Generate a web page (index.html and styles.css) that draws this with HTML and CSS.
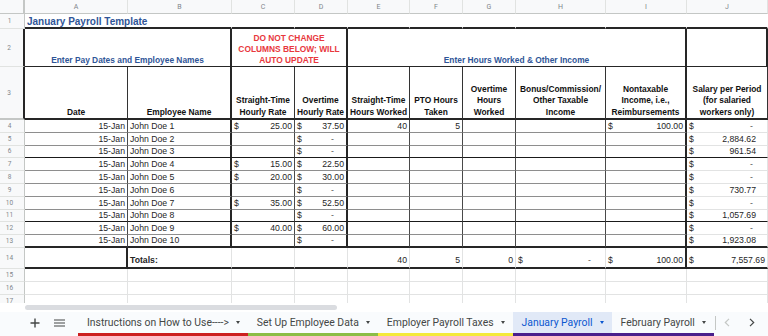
FILE: index.html
```html
<!DOCTYPE html>
<html lang="en">
  <head>
    <meta charset="UTF-8" />
    <meta name="viewport" content="width=device-width, initial-scale=1.0" />
    <title>January Payroll</title>
    <link rel="stylesheet" href="styles.css">
  </head>
  <body>
    <div class="app">
      <div class="sheet">
        <table class="grid">
          <colgroup>
            <col class="w-rh">
            <col class="w-a">
            <col class="w-b">
            <col class="w-c">
            <col class="w-d">
            <col class="w-e">
            <col class="w-f">
            <col class="w-g">
            <col class="w-h">
            <col class="w-i">
            <col class="w-j">
          </colgroup>
          <tr class="letters">
            <th class="corner"></th>
            <th class="col">A</th>
            <th class="col">B</th>
            <th class="col">C</th>
            <th class="col">D</th>
            <th class="col">E</th>
            <th class="col">F</th>
            <th class="col">G</th>
            <th class="col">H</th>
            <th class="col">I</th>
            <th class="col">J</th>
          </tr>
          <tr class="row-title">
            <th class="rh">1</th>
            <td class="title" colspan="2">January Payroll Template</td>
            <td></td><td></td><td></td><td></td><td></td><td></td><td></td><td></td>
          </tr>
          <tr class="row-groups">
            <th class="rh edge">2</th>
            <td class="group" colspan="2">Enter Pay Dates and Employee Names</td>
            <td class="group warn" colspan="2">DO NOT CHANGE<br>COLUMNS BELOW; WILL<br>AUTO UPDATE</td>
            <td class="group" colspan="5">Enter Hours Worked &amp; Other Income</td>
            <td class="group"></td>
          </tr>
          <tr class="row-heads">
            <th class="rh edge freeze">3</th>
            <td>Date</td>
            <td>Employee Name</td>
            <td>Straight-Time<br>Hourly Rate</td>
            <td>Overtime<br>Hourly Rate</td>
            <td>Straight-Time<br>Hours Worked</td>
            <td>PTO Hours<br>Taken</td>
            <td>Overtime<br>Hours<br>Worked</td>
            <td>Bonus/Commission/<br>Other Taxable<br>Income</td>
            <td>Nontaxable<br>Income, i.e.,<br>Reimbursements</td>
            <td>Salary per Period<br>(for salaried<br>workers only)</td>
          </tr>
          <tr class="data">
            <th class="rh">4</th>
            <td class="num">15-Jan</td><td>John Doe 1</td>
            <td class="acct"><span class="cur">$</span>25.00</td>
            <td class="acct"><span class="cur">$</span>37.50</td>
            <td class="num">40</td><td class="num">5</td><td></td><td></td>
            <td class="acct"><span class="cur">$</span>100.00</td>
            <td class="acct"><span class="cur">$</span><span class="dash">-</span></td>
          </tr>
          <tr class="data">
            <th class="rh">5</th>
            <td class="num">15-Jan</td><td>John Doe 2</td>
            <td></td>
            <td class="acct"><span class="cur">$</span><span class="dash">-</span></td>
            <td></td><td></td><td></td><td></td><td></td>
            <td class="acct"><span class="cur">$</span>2,884.62</td>
          </tr>
          <tr class="data dark">
            <th class="rh">6</th>
            <td class="num">15-Jan</td><td>John Doe 3</td>
            <td></td>
            <td class="acct"><span class="cur">$</span><span class="dash">-</span></td>
            <td></td><td></td><td></td><td></td><td></td>
            <td class="acct"><span class="cur">$</span>961.54</td>
          </tr>
          <tr class="data">
            <th class="rh">7</th>
            <td class="num">15-Jan</td><td>John Doe 4</td>
            <td class="acct"><span class="cur">$</span>15.00</td>
            <td class="acct"><span class="cur">$</span>22.50</td>
            <td></td><td></td><td></td><td></td><td></td>
            <td class="acct"><span class="cur">$</span><span class="dash">-</span></td>
          </tr>
          <tr class="data">
            <th class="rh">8</th>
            <td class="num">15-Jan</td><td>John Doe 5</td>
            <td class="acct"><span class="cur">$</span>20.00</td>
            <td class="acct"><span class="cur">$</span>30.00</td>
            <td></td><td></td><td></td><td></td><td></td>
            <td class="acct"><span class="cur">$</span><span class="dash">-</span></td>
          </tr>
          <tr class="data">
            <th class="rh">9</th>
            <td class="num">15-Jan</td><td>John Doe 6</td>
            <td></td>
            <td class="acct"><span class="cur">$</span><span class="dash">-</span></td>
            <td></td><td></td><td></td><td></td><td></td>
            <td class="acct"><span class="cur">$</span>730.77</td>
          </tr>
          <tr class="data">
            <th class="rh">10</th>
            <td class="num">15-Jan</td><td>John Doe 7</td>
            <td class="acct"><span class="cur">$</span>35.00</td>
            <td class="acct"><span class="cur">$</span>52.50</td>
            <td></td><td></td><td></td><td></td><td></td>
            <td class="acct"><span class="cur">$</span><span class="dash">-</span></td>
          </tr>
          <tr class="data dark">
            <th class="rh">11</th>
            <td class="num">15-Jan</td><td>John Doe 8</td>
            <td></td>
            <td class="acct"><span class="cur">$</span><span class="dash">-</span></td>
            <td></td><td></td><td></td><td></td><td></td>
            <td class="acct"><span class="cur">$</span>1,057.69</td>
          </tr>
          <tr class="data">
            <th class="rh">12</th>
            <td class="num">15-Jan</td><td>John Doe 9</td>
            <td class="acct"><span class="cur">$</span>40.00</td>
            <td class="acct"><span class="cur">$</span>60.00</td>
            <td></td><td></td><td></td><td></td><td></td>
            <td class="acct"><span class="cur">$</span><span class="dash">-</span></td>
          </tr>
          <tr class="data last">
            <th class="rh">13</th>
            <td class="num">15-Jan</td><td>John Doe 10</td>
            <td></td>
            <td class="acct"><span class="cur">$</span><span class="dash">-</span></td>
            <td></td><td></td><td></td><td></td><td></td>
            <td class="acct"><span class="cur">$</span>1,923.08</td>
          </tr>
          <tr class="totals">
            <th class="rh">14</th>
            <td></td><td class="label">Totals:</td>
            <td></td><td></td>
            <td class="num">40</td><td class="num">5</td><td class="num">0</td>
            <td class="acct"><span class="cur">$</span><span class="dash">-</span></td>
            <td class="acct"><span class="cur">$</span>100.00</td>
            <td class="acct"><span class="cur">$</span>7,557.69</td>
          </tr>
          <tr class="blank">
            <th class="rh">15</th>
            <td></td><td></td><td></td><td></td><td></td><td></td><td></td><td></td><td></td><td></td>
          </tr>
          <tr class="blank">
            <th class="rh">16</th>
            <td></td><td></td><td></td><td></td><td></td><td></td><td></td><td></td><td></td><td></td>
          </tr>
          <tr class="blank">
            <th class="rh">17</th>
            <td></td><td></td><td></td><td></td><td></td><td></td><td></td><td></td><td></td><td></td>
          </tr>
        </table>
        <div class="hscroll"><div class="thumb"></div></div>
      </div>

      <div class="tabbar">
        <button class="tool" title="Add sheet">
          <svg width="10" height="10" viewBox="0 0 10 10"><path d="M5 0.5v9M0.5 5h9" stroke="#444746" stroke-width="1.4" fill="none"/></svg>
        </button>
        <button class="tool" title="All sheets">
          <svg width="11" height="8" viewBox="0 0 11 8"><path d="M0 1h11M0 4h11M0 7h11" stroke="#444746" stroke-width="1.2" fill="none"/></svg>
        </button>
        <div class="tab red">Instructions on How to Use----&gt; <span class="caret"></span></div>
        <div class="tab green">Set Up Employee Data <span class="caret"></span></div>
        <div class="tab yellow">Employer Payroll Taxes <span class="caret"></span></div>
        <div class="tab purple active">January Payroll <span class="caret"></span></div>
        <div class="tab purple">February Payroll <span class="caret"></span></div>
        <div class="divider"></div>
        <button class="nav disabled">
          <svg width="6" height="9" viewBox="0 0 6 9"><path d="M5 0.8L1.3 4.5L5 8.2" stroke="currentColor" stroke-width="1.2" fill="none"/></svg>
        </button>
        <button class="nav">
          <svg width="6" height="9" viewBox="0 0 6 9"><path d="M1 0.8L4.7 4.5L1 8.2" stroke="currentColor" stroke-width="1.2" fill="none"/></svg>
        </button>
      </div>
    </div>
  </body>
</html>
```

FILE: styles.css
```css
body {
  margin: 0;
  font-family: Roboto, "Liberation Sans", sans-serif;
  background-color: #fff;
  overflow: hidden;
}

.app {
  width: 768px;
  height: 336px;
  display: flex;
  flex-direction: column;
}

.sheet {
  position: relative;
  height: 312px;
  overflow: hidden;
}

/* column widths */
.w-rh { width: 25px; }
.w-a { width: 103px; }
.w-b { width: 104px; }
.w-c { width: 63px; }
.w-d { width: 53px; }
.w-e { width: 62px; }
.w-f { width: 53px; }
.w-g { width: 53px; }
.w-h { width: 90px; }
.w-i { width: 81px; }
.w-j { width: 81px; }

.grid {
  table-layout: fixed;
  width: 768px;
  border-collapse: separate;
  border-spacing: 0;
  font-family: "Liberation Sans", Arial, sans-serif;
  font-size: 8.4px;
  color: #262626;
}

.grid td {
  padding: 0 2px;
  border-right: 1px solid #e2e3e3;
  border-bottom: 1px solid #e2e3e3;
  white-space: nowrap;
  overflow: hidden;
  vertical-align: bottom;
  line-height: 11px;
}

/* headers of the sheet */
.corner,
.col,
.rh {
  padding: 0;
  background-color: #f8f9fa;
  color: #80868b;
  font-family: Roboto, sans-serif;
  font-weight: normal;
  vertical-align: middle;
}

.corner {
  border-right: 2px solid #c4c7c5;
  border-bottom: 1px solid #c4c7c5;
}

.col {
  font-size: 7px;
  border-right: 1px solid #e1e3e1;
  border-bottom: 1px solid #c4c7c5;
}

.rh {
  font-size: 6.5px;
  text-align: center;
  padding-right: 5px;
  border-right: 1px solid #c4c7c5;
  border-bottom: 1px solid #e1e3e1;
}

.rh.edge {
  border-right: 2px solid #262626;
}

.rh.freeze {
  border-bottom: 2px solid #c4c7c5;
}

.letters { height: 14px; }
.row-title { height: 15px; }
.row-groups { height: 38px; }
.row-heads { height: 53px; }
.data { height: 12.8px; }
.totals { height: 21px; }
.blank { height: 13px; }

/* row 1 */
.row-title td {
  border-bottom: 2px solid #262626;
  border-right-color: #fff;
}

.title {
  font-size: 10px;
  font-weight: bold;
  color: #2f5597;
  line-height: 12px;
}

/* row 2 */
.row-groups td {
  border-right: 2px solid #262626;
  border-bottom: 1px solid #262626;
}

.group {
  text-align: center;
  font-weight: bold;
  color: #2f5597;
  padding-bottom: 1px;
}

.warn {
  color: #e8383d;
  line-height: 12.4px;
  vertical-align: middle;
  padding-top: 1px;
}

/* row 3 */
.row-heads td {
  text-align: center;
  font-weight: bold;
  color: #111;
  padding-bottom: 0;
  line-height: 11.4px;
  border-right: 1px solid #333;
  border-bottom: 2px solid #262626;
}

.row-heads td:nth-child(3),
.row-heads td:nth-child(5),
.row-heads td:nth-child(10) {
  border-right: 2px solid #262626;
}

/* rows 4-13 */
.data td {
  font-size: 8.7px;
  border-right: 1px solid #4a4a4a;
  border-bottom: 1px solid #8e8e8e;
}

.data td:nth-child(3),
.data td:nth-child(5),
.data td:nth-child(10) {
  border-right: 2px solid #262626;
}

.data td:nth-child(11) {
  border-right: 1px solid #e2e3e3;
  border-bottom: 1px solid #e2e3e3;
}

.data.dark td {
  border-bottom: 1px solid #1a1a1a;
}

.data.last td {
  border-bottom: 2px solid #262626;
}

/* row 14 */
.totals td {
  font-size: 8.7px;
  border-bottom: 2px solid #262626;
  padding-bottom: 1px;
}

.totals td:nth-child(2),
.totals td:nth-child(10) {
  border-right: 2px solid #262626;
}

.label {
  font-weight: bold;
  padding-left: 3px;
}

.num {
  text-align: right;
}

.acct {
  text-align: right;
  padding: 0 4px 0 5px;
}

.cur {
  float: left;
}

.dash {
  padding-right: 10px;
  color: #555;
}

.data .acct:last-child {
  padding-right: 11px;
}

.data .acct:last-child .dash {
  padding-right: 3px;
}

.totals .acct .dash {
  padding-right: 12px;
}

/* horizontal scrollbar over the last row */
.hscroll {
  position: absolute;
  left: 0;
  right: 0;
  bottom: 0;
  height: 9px;
  background-color: #fff;
}

.hscroll .thumb {
  margin: 2px 0 0 25px;
  width: 312px;
  height: 5px;
  border-radius: 3px;
  background-color: #dadce0;
}

/* sheet tabs */
.tabbar {
  height: 24px;
  display: flex;
  align-items: stretch;
  padding-left: 23px;
  background-color: #f9fbfd;
  font-size: 10.4px;
  color: #444746;
}

.tool,
.nav {
  border: none;
  background: none;
  padding: 0;
  display: flex;
  align-items: center;
  justify-content: center;
  cursor: pointer;
}

.tool {
  width: 24px;
  margin-bottom: 3px;
}

.tool + .tool {
  margin-right: 7px;
}

.tab {
  display: flex;
  align-items: center;
  gap: 7px;
  padding: 0 8px 0 9px;
  border-bottom: 3px solid transparent;
  white-space: nowrap;
}

.caret {
  width: 0;
  height: 0;
  border-left: 2.5px solid transparent;
  border-right: 2.5px solid transparent;
  border-top: 3px solid #444746;
}

.tab.red { border-bottom-color: #cc1f1f; }
.tab.green { border-bottom-color: #8bbd46; }
.tab.yellow { border-bottom-color: #f4ea3a; }
.tab.purple { border-bottom-color: #4a1f8c; }

.tab.active {
  background-color: #e1e9f7;
  color: #0b57d0;
}

.tab.active .caret {
  border-top-color: #0b57d0;
}

.divider {
  flex-shrink: 0;
  width: 1px;
  height: 14px;
  margin: 4px 1px 0 1px;
  background-color: #c4c7c5;
}

.nav {
  flex-shrink: 0;
  width: 20px;
  margin-bottom: 3px;
  color: #444746;
}

.nav + .nav {
  margin-left: 5px;
}

.nav.disabled {
  color: #c4c7c5;
}
```
